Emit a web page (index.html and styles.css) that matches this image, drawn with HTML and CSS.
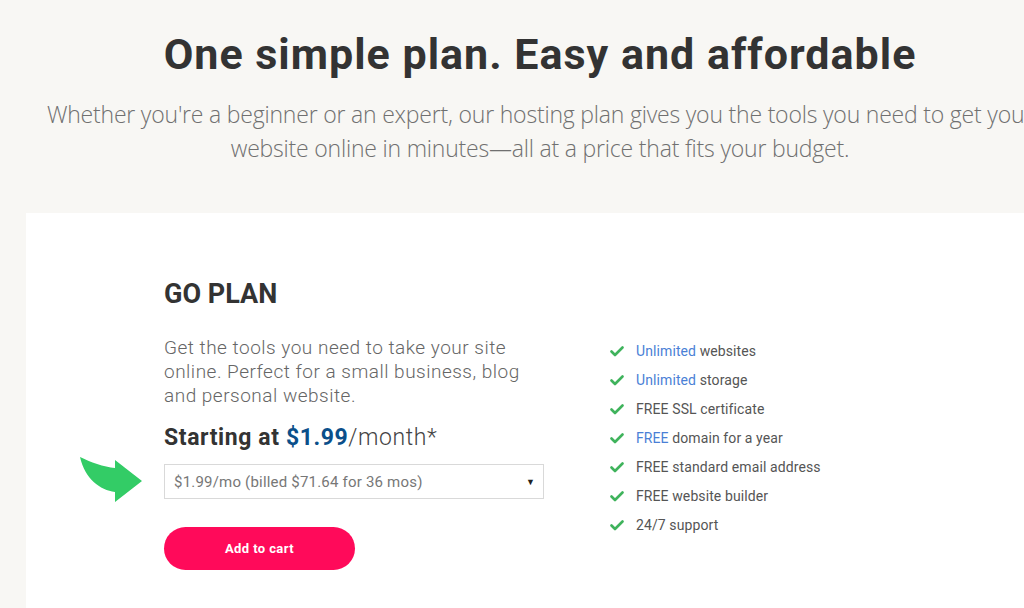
FILE: index.html
```html
<!DOCTYPE html>
<html lang="en">
<head>
<meta charset="utf-8">
<title>Go Plan</title>
<link rel="stylesheet" href="styles.css">
</head>
<body>
<div class="page">
  <header class="intro">
    <h1 class="title">One simple plan. Easy and affordable</h1>
    <p class="lead">Whether you're a beginner or an expert, our hosting plan gives you the tools you need to get your website online in minutes—all at a price that fits your budget.</p>
  </header>
  <section class="card">
    <div class="plan">
      <h2 class="plan-name">GO PLAN</h2>
      <p class="plan-desc">Get the tools you need to take your site online. Perfect for a small business, blog and personal website.</p>
      <p class="price">Starting at <span class="price-amount">$1.99</span><span class="price-unit">/month*</span></p>
      <div class="select-row">
        <svg class="pointer" width="66" height="52" viewBox="0 0 66 52" aria-hidden="true">
          <path d="M2 3 C 12 8, 26 13, 37 14 L 37 6 L 64 27 L 37 48 L 37 38 C 22 36, 7 25, 2 3 Z" fill="#33cc66"/>
        </svg>
        <div class="select">
          <span class="select-text">$1.99/mo (billed $71.64 for 36 mos)</span>
          <span class="caret">▼</span>
        </div>
      </div>
      <button class="cart-btn">Add to cart</button>
    </div>
    <ul class="features">
      <li class="feature"><svg class="check" width="14" height="11" viewBox="0 0 14 11"><path d="M1.5 5.5 L5 9 L12.5 1.5" fill="none" stroke="#3fb35c" stroke-width="2.6" stroke-linecap="round" stroke-linejoin="round"/></svg><span><span class="hl">Unlimited</span> websites</span></li>
      <li class="feature"><svg class="check" width="14" height="11" viewBox="0 0 14 11"><path d="M1.5 5.5 L5 9 L12.5 1.5" fill="none" stroke="#3fb35c" stroke-width="2.6" stroke-linecap="round" stroke-linejoin="round"/></svg><span><span class="hl">Unlimited</span> storage</span></li>
      <li class="feature"><svg class="check" width="14" height="11" viewBox="0 0 14 11"><path d="M1.5 5.5 L5 9 L12.5 1.5" fill="none" stroke="#3fb35c" stroke-width="2.6" stroke-linecap="round" stroke-linejoin="round"/></svg><span>FREE SSL certificate</span></li>
      <li class="feature"><svg class="check" width="14" height="11" viewBox="0 0 14 11"><path d="M1.5 5.5 L5 9 L12.5 1.5" fill="none" stroke="#3fb35c" stroke-width="2.6" stroke-linecap="round" stroke-linejoin="round"/></svg><span><span class="hl">FREE</span> domain for a year</span></li>
      <li class="feature"><svg class="check" width="14" height="11" viewBox="0 0 14 11"><path d="M1.5 5.5 L5 9 L12.5 1.5" fill="none" stroke="#3fb35c" stroke-width="2.6" stroke-linecap="round" stroke-linejoin="round"/></svg><span>FREE standard email address</span></li>
      <li class="feature"><svg class="check" width="14" height="11" viewBox="0 0 14 11"><path d="M1.5 5.5 L5 9 L12.5 1.5" fill="none" stroke="#3fb35c" stroke-width="2.6" stroke-linecap="round" stroke-linejoin="round"/></svg><span>FREE website builder</span></li>
      <li class="feature"><svg class="check" width="14" height="11" viewBox="0 0 14 11"><path d="M1.5 5.5 L5 9 L12.5 1.5" fill="none" stroke="#3fb35c" stroke-width="2.6" stroke-linecap="round" stroke-linejoin="round"/></svg><span>24/7 support</span></li>
    </ul>
  </section>
</div>
</body>
</html>
```

FILE: styles.css
```css
html, body {
  margin: 0;
  padding: 0;
}
body {
  background: #f8f7f4;
  overflow: hidden;
  font-family: Roboto, "Liberation Sans", sans-serif;
  color: #333;
}
.page {
  width: 1080px;
}
.intro {
  text-align: center;
  padding-top: 30px;
}
.title {
  margin: 0;
  font-family: Roboto, "Liberation Sans", sans-serif;
  font-weight: 700;
  font-size: 43px;
  letter-spacing: 1px;
  line-height: 48px;
  color: #333;
}
.lead {
  width: 1000px;
  margin: 19px auto 0;
  font-family: "Open Sans", sans-serif;
  font-weight: 300;
  font-size: 23px;
  line-height: 34px;
  letter-spacing: -0.2px;
  color: #707070;
}
.card {
  margin: 48px 0 0 26px;
  background: #fff;
  height: 400px;
  display: flex;
  padding: 65px 0 0 138px;
  box-sizing: border-box;
}
.plan {
  width: 380px;
  display: flex;
  flex-direction: column;
}
.plan-name {
  margin: 0;
  font-size: 27px;
  line-height: 32px;
  font-weight: 700;
  color: #333;
}
.plan-desc {
  max-width: 366px;
  margin: 26px 0 0;
  font-size: 19px;
  letter-spacing: 0.5px;
  line-height: 24px;
  font-weight: 300;
  color: #666;
}
.price {
  margin: 16px 0 0;
  font-size: 23px;
  letter-spacing: 0.6px;
  line-height: 28px;
  font-weight: 700;
  color: #333;
}
.price-amount {
  color: #0b4f8a;
}
.price-unit {
  font-weight: 300;
  color: #444;
}
.select-row {
  position: relative;
  margin-top: 12px;
}
.pointer {
  position: absolute;
  left: -86px;
  top: -10px;
}
.select {
  height: 35px;
  border: 1px solid #d9d9d9;
  box-sizing: border-box;
  display: flex;
  align-items: center;
  justify-content: space-between;
  padding: 0 8px 0 9px;
  background: #fff;
}
.select-text {
  font-size: 15px;
  letter-spacing: 0.2px;
  color: #777;
}
.caret {
  font-size: 9px;
  color: #222;
}
.cart-btn {
  margin-top: 28px;
  width: 191px;
  height: 43px;
  border: none;
  border-radius: 22px;
  background: #ff0a5a;
  color: #fff;
  font-family: Roboto, "Liberation Sans", sans-serif;
  font-weight: 700;
  font-size: 13px;
  letter-spacing: 0.4px;
  cursor: pointer;
}
.features {
  list-style: none;
  margin: 64px 0 0 66px;
  padding: 0;
  display: flex;
  flex-direction: column;
  gap: 11px;
}
.feature {
  display: flex;
  align-items: center;
  gap: 12px;
  font-size: 14px;
  letter-spacing: 0.1px;
  line-height: 18px;
  color: #555;
}
.check {
  flex: none;
}
.hl {
  color: #4a7fd6;
}
```
